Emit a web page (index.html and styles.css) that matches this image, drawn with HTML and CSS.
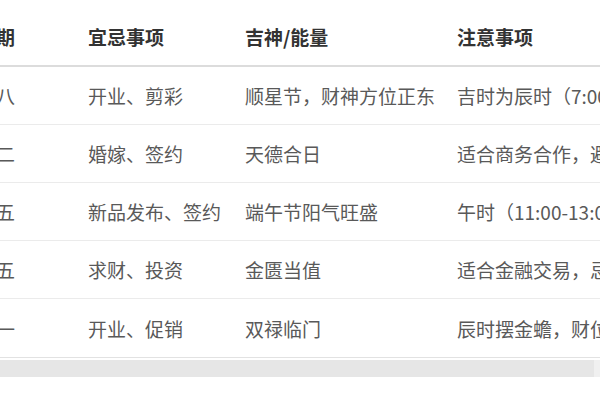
FILE: index.html
```html
<!DOCTYPE html>
<html lang="zh-CN">
<head>
<meta charset="utf-8">
<title>宜忌表</title>
<link rel="stylesheet" href="styles.css">
</head>
<body>
<div class="scroller">
  <table class="almanac">
    <colgroup>
      <col class="c-date"><col class="c-do"><col class="c-god"><col class="c-note">
    </colgroup>
    <thead>
      <tr><th>日期</th><th>宜忌事项</th><th>吉神/能量</th><th>注意事项</th></tr>
    </thead>
    <tbody>
      <tr><td>初八</td><td>开业、剪彩</td><td>顺星节，财神方位正东</td><td>吉时为辰时（7:00-9:00）</td></tr>
      <tr><td>十二</td><td>婚嫁、签约</td><td>天德合日</td><td>适合商务合作，避免争执</td></tr>
      <tr><td>十五</td><td>新品发布、签约</td><td>端午节阳气旺盛</td><td>午时（11:00-13:00）最佳</td></tr>
      <tr><td>廿五</td><td>求财、投资</td><td>金匮当值</td><td>适合金融交易，忌冲动消费</td></tr>
      <tr><td>初一</td><td>开业、促销</td><td>双禄临门</td><td>辰时摆金蟾，财位旺</td></tr>
    </tbody>
  </table>
</div>
<div class="scrollbar"><div class="thumb"></div></div>
</body>
</html>
```
FILE: styles.css
```css
html, body {
  margin: 0;
  padding: 0;
  background: #fff;
}
body {
  font-family: "Noto Sans CJK SC", "Noto Sans", sans-serif;
  width: 600px;
  height: 400px;
  overflow: hidden;
  padding-top: 8px;
  box-sizing: border-box;
}
.scroller {
  width: 600px;
  overflow: hidden;
}
.almanac {
  margin-left: -39px;
  border-collapse: collapse;
  table-layout: fixed;
  width: 900px;
  white-space: nowrap;
}
.c-date { width: 111px; }
.c-do { width: 157px; }
.c-god { width: 212px; }
.c-note { width: 420px; }
.almanac th,
.almanac td {
  text-align: left;
  padding: 0 0 0 16px;
  font-size: 19px;
  overflow: hidden;
}
.almanac th {
  height: 57px;
  font-weight: 700;
  color: #333;
  border-bottom: 2px solid #dcdcdc;
}
.almanac td {
  height: 57px;
  color: #595959;
  border-bottom: 1px solid #ebebeb;
}
.almanac tbody tr:last-child td {
  height: 58px;
  border-bottom-color: #e2e2e2;
}
.scrollbar {
  margin-top: 2px;
  width: 600px;
  height: 17px;
  background: #f0f0f0;
}
.thumb {
  width: 594px;
  height: 17px;
  background: #e6e6e6;
}
```
